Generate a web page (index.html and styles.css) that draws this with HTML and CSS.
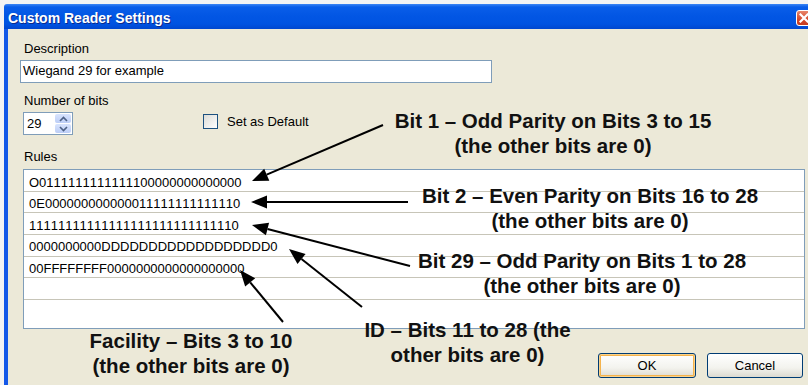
FILE: index.html
```html
<!DOCTYPE html>
<html>
<head>
<meta charset="utf-8">
<link rel="stylesheet" href="styles.css">
</head>
<body>
<div class="window">
  <div class="titlebar">
    <span class="title">Custom Reader Settings</span>
    <span class="close"><svg width="10" height="10" viewBox="0 0 10 10"><path d="M1.5 1.5 L8.5 8.5 M8.5 1.5 L1.5 8.5" stroke="#fff" stroke-width="2.2" stroke-linecap="square"/></svg></span>
  </div>
  <div class="frame">
    <div class="label desc-label">Description</div>
    <div class="textbox">Wiegand 29 for example</div>
    <div class="label bits-label">Number of bits</div>
    <div class="bits-row">
      <div class="spinner">
        <span class="spin-value">29</span>
        <span class="spin-buttons">
          <span class="spin-btn"><svg width="9" height="6" viewBox="0 0 9 6"><path d="M1 5 L4.5 1.5 L8 5" fill="none" stroke="#4d6185" stroke-width="1.6"/></svg></span>
          <span class="spin-btn"><svg width="9" height="6" viewBox="0 0 9 6"><path d="M1 1 L4.5 4.5 L8 1" fill="none" stroke="#4d6185" stroke-width="1.6"/></svg></span>
        </span>
      </div>
      <div class="checkbox-wrap">
        <span class="checkbox"></span>
        <span class="check-label">Set as Default</span>
      </div>
    </div>
    <div class="label rules-label">Rules</div>
    <div class="rules">
      <div class="rule">O0111111111111100000000000000</div>
      <div class="rule">0E000000000000011111111111110</div>
      <div class="rule">11111111111111111111111111110</div>
      <div class="rule">0000000000DDDDDDDDDDDDDDDDDD0</div>
      <div class="rule">00FFFFFFFF0000000000000000000</div>
      <div class="rule"></div>
    </div>
    <div class="footer">
      <button class="btn btn-ok">OK</button>
      <button class="btn btn-cancel">Cancel</button>
    </div>
  </div>
</div>

<div class="annotations">
  <svg class="arrows" width="808" height="385" viewBox="0 0 808 385">
    <g stroke="#000" stroke-width="2">
      <line x1="383" y1="125" x2="266.7" y2="174.7"/>
      <line x1="408" y1="202" x2="267" y2="202"/>
      <line x1="410" y1="266" x2="267.5" y2="229"/>
      <line x1="362" y1="307" x2="301.5" y2="259"/>
      <line x1="283" y1="322" x2="250.2" y2="282.3"/>
    </g>
    <g fill="#000">
      <polygon points="252,181 269.3,180.7 264.2,168.7"/>
      <polygon points="251,202 267,195.5 267,208.5"/>
      <polygon points="252,225 269.1,222.7 265.9,235.3"/>
      <polygon points="289,249 305.6,253.9 297.5,264.1"/>
      <polygon points="240,270 255.2,278.2 245.2,286.5"/>
    </g>
  </svg>
  <div class="note note-1">Bit 1 – Odd Parity on Bits 3 to 15<br>(the other bits are 0)</div>
  <div class="note note-2">Bit 2 – Even Parity on Bits 16 to 28<br>(the other bits are 0)</div>
  <div class="note note-3">Bit 29 – Odd Parity on Bits 1 to 28<br>(the other bits are 0)</div>
  <div class="note note-4">ID – Bits 11 to 28 (the<br>other bits are 0)</div>
  <div class="note note-5">Facility – Bits 3 to 10<br>(the other bits are 0)</div>
</div>
</body>
</html>
```

FILE: styles.css
```css
html, body {
  margin: 0;
  padding: 0;
}
body {
  width: 808px;
  height: 385px;
  overflow: hidden;
  background: #f4f4f4;
  position: relative;
  font-family: "Liberation Sans", Arial, sans-serif;
  font-size: 13px;
  color: #000;
}
.window {
  margin: 4px 0 0 4px;
  width: 830px;
}
.titlebar {
  height: 25px;
  display: flex;
  align-items: center;
  padding: 0 22px 0 4px;
  background: linear-gradient(to bottom, #3d86f4 0px, #0a5ee9 3px, #0256e4 12px, #0053e1 20px, #0047cf 25px);
  border-top-left-radius: 3px;
}
.title {
  flex: 1;
  color: #fff;
  font-weight: bold;
  font-size: 14px;
  line-height: 16px;
  padding-top: 2px;
  text-shadow: 1px 1px 0 #0a2a8c;
}
.close {
  width: 16px;
  height: 16px;
  box-sizing: border-box;
  border: 1px solid #fff;
  border-radius: 3px;
  background: linear-gradient(to bottom, #e8866a, #d5482a 60%, #c43b1f);
  display: flex;
  align-items: center;
  justify-content: center;
  margin-top: 2px;
}
.frame {
  background: #ece9d8;
  border-left: 4px solid #1458e8;
  height: 360px;
  padding-top: 12px;
  box-sizing: border-box;
}
.label {
  line-height: 15px;
  padding-left: 16px;
}
.textbox {
  margin: 4px 0 0 12px;
  width: 472px;
  height: 23px;
  box-sizing: border-box;
  border: 1px solid #7f9db9;
  background: #fff;
  padding: 2px 2px 0;
  line-height: 15px;
}
.bits-label {
  margin-top: 10px;
}
.bits-row {
  display: flex;
  align-items: flex-start;
  margin: 4px 0 0 15px;
}
.spinner {
  width: 50px;
  height: 23px;
  box-sizing: border-box;
  border: 1px solid #7f9db9;
  background: #fff;
  display: flex;
  justify-content: space-between;
  padding: 1px;
}
.spin-value {
  padding: 2px 0 0 2px;
  line-height: 15px;
}
.spin-buttons {
  width: 16px;
  display: flex;
  flex-direction: column;
  gap: 1px;
}
.spin-btn {
  flex: 1;
  display: flex;
  align-items: center;
  justify-content: center;
  background: linear-gradient(to bottom, #d8e4fd, #bccdf6);
  border-radius: 2px;
}
.checkbox-wrap {
  display: flex;
  align-items: center;
  margin: 1px 0 0 130px;
  gap: 9px;
}
.checkbox {
  width: 13px;
  height: 13px;
  border: 1px solid #1c5180;
  background: linear-gradient(135deg, #dcdcd7, #ffffff);
}
.check-label {
  line-height: 15px;
  padding-top: 1px;
}
.rules-label {
  margin-top: 14px;
}
.rules {
  margin: 5px 0 0 15px;
  width: 782px;
  height: 160px;
  box-sizing: border-box;
  border: 1px solid #7f9db9;
  background: #fff;
}
.rule {
  height: 21.67px;
  box-sizing: border-box;
  border-bottom: 1px solid #c7c5b8;
  padding: 4.5px 0 0 5px;
  line-height: 15px;
  white-space: nowrap;
  font-kerning: none;
}
.footer {
  width: 782px;
  margin: 24px 0 0 15px;
  display: flex;
  justify-content: flex-end;
  gap: 11px;
  padding-right: 2px;
  box-sizing: border-box;
}
.btn {
  height: 25px;
  box-sizing: border-box;
  border: 1px solid #003c74;
  border-radius: 3px;
  background: linear-gradient(to bottom, #ffffff, #f3f3ee 60%, #dcdad0);
  font-family: "Liberation Sans", Arial, sans-serif;
  font-size: 13px;
  color: #000;
  padding: 0;
}
.btn-ok {
  width: 98px;
  box-shadow: inset 0 0 0 1px #fbd28a, inset 0 0 0 2px #f4b34d;
}
.btn-cancel {
  width: 96px;
}
.annotations {
  position: absolute;
  left: 0;
  top: 0;
  width: 808px;
  height: 385px;
  pointer-events: none;
}
.arrows {
  position: absolute;
  left: 0;
  top: 0;
}
.note {
  position: absolute;
  width: 420px;
  text-align: center;
  white-space: nowrap;
  font-family: "Liberation Sans", Arial, sans-serif;
  font-weight: bold;
  font-size: 20.5px;
  line-height: 25px;
  color: #111;
}
.note-1 { left: 343px; top: 108.4px; }
.note-2 { left: 380px; top: 183.4px; }
.note-3 { left: 372px; top: 248.4px; }
.note-4 { left: 257.5px; top: 317.4px; }
.note-5 { left: -19px; top: 328.4px; }
```
